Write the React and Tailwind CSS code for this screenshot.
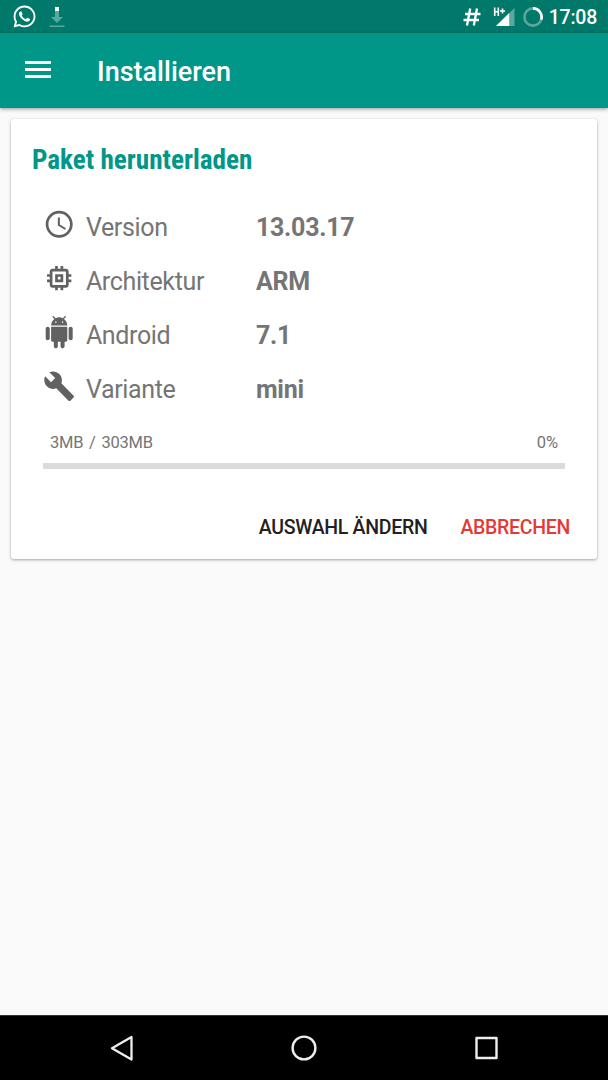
import { FaWhatsapp } from "react-icons/fa";
import { MdAccessTime, MdBuild, MdMemory } from "react-icons/md";

const AndroidIcon = ({ className = "" }) => (
  <svg viewBox="0 0 24 24" fill="currentColor" className={className}>
    <path d="M6 18c0 .55.45 1 1 1h1v3.5c0 .83.67 1.5 1.5 1.5s1.5-.67 1.5-1.5V19h2v3.5c0 .83.67 1.5 1.5 1.5s1.5-.67 1.5-1.5V19h1c.55 0 1-.45 1-1V8H6v10zM3.5 8C2.67 8 2 8.67 2 9.5v7c0 .83.67 1.5 1.5 1.5S5 17.33 5 16.5v-7C5 8.67 4.33 8 3.5 8zm17 0c-.83 0-1.5.67-1.5 1.5v7c0 .83.67 1.5 1.5 1.5s1.5-.67 1.5-1.5v-7c0-.83-.67-1.5-1.5-1.5zm-4.97-5.84l1.3-1.3c.2-.2.2-.51 0-.71-.2-.2-.51-.2-.71 0l-1.48 1.48C13.85 1.23 12.95 1 12 1c-.96 0-1.86.23-2.66.63L7.85.15c-.2-.2-.51-.2-.71 0-.2.2-.2.51 0 .71l1.31 1.31C6.97 3.26 6 5.01 6 7h12c0-1.99-.97-3.75-2.47-4.84zM10 5H9V4h1v1zm5 0h-1V4h1v1z" />
  </svg>
);

const rows = [
  { icon: MdAccessTime, label: "Version", value: "13.03.17" },
  { icon: MdMemory, label: "Architektur", value: "ARM" },
  { icon: AndroidIcon, label: "Android", value: "7.1" },
  { icon: MdBuild, label: "Variante", value: "mini" },
];

const StatusBar = () => (
  <div className="flex h-[33px] items-center bg-[#00796b] pl-3 pr-[11px] text-white">
    <FaWhatsapp className="h-[25px] w-[25px]" />
    <svg viewBox="0 0 16 22" className="ml-3 h-[22px] w-4">
      <path d="M6 5h4v6h4l-6 6-6-6h4zM.5 19.5h15v1.5H.5z" fill="#fff" fillOpacity=".35" />
      <path d="M6 1h4v4H6z" fill="#fff" />
    </svg>
    <svg viewBox="0 0 18 20" className="ml-auto h-5 w-[18px]" fill="none" stroke="#fff" strokeWidth="2.3">
      <path d="M7.2 1.5 4 18.5M14 1.5l-3.2 17M2 7h15.5M.5 13H16" />
    </svg>
    <svg viewBox="0 0 22 20" className="ml-3 h-5 w-[22px]">
      <path d="M21.5 1v18H3z" fill="#fff" fillOpacity=".35" />
      <path d="M16.2 6v13H3z" fill="#fff" />
      <path d="M1.7.5v8.5M5.3.5v8.5M1.7 4.8h3.6M7 4h5M9.5 1.5v5" fill="none" stroke="#fff" strokeWidth="1.6" />
    </svg>
    <svg viewBox="0 0 20 20" className="ml-2 h-5 w-5" fill="none" stroke="#fff" strokeWidth="2.6">
      <circle cx="10" cy="10" r="8.6" strokeOpacity=".35" />
      <path d="M10 1.4a8.6 8.6 0 0 1 8.2 11.2" />
    </svg>
    <span className="ml-1.5 pt-[3px] text-[19.5px] font-medium leading-none tracking-[-0.25px]">17:08</span>
  </div>
);

const Toolbar = () => (
  <header className="relative flex h-[75px] items-center bg-[#009688] pl-[25px] text-white shadow-[0_1px_4px_rgba(0,0,0,0.4)]">
    <div className="-mt-0.5 flex w-[26px] flex-col gap-[4.5px]">
      <div className="h-[2.7px] bg-white" />
      <div className="h-[2.7px] bg-white" />
      <div className="h-[2.7px] bg-white" />
    </div>
    <h1 className="ml-[46px] pt-[3px] text-[27px] font-medium leading-none">Installieren</h1>
  </header>
);

const PackageCard = () => (
  <section className="mx-[11px] mt-[11px] flex h-[440px] flex-col rounded-[3px] bg-white shadow-[0_1px_3px_rgba(0,0,0,0.35)]">
    <h2 className="pl-[21px] pt-[25px] text-[27.2px] font-bold leading-8 text-[#009688] [font-stretch:75%]">
      Paket herunterladen
    </h2>
    <div className="mt-[23px] pl-8">
      {rows.map(({ icon: Icon, label, value }) => (
        <div key={label} className="flex h-[54px] items-center text-[25px] text-[#757575]">
          <Icon className="mb-[3px] h-[32.4px] w-[32.4px] text-[#616161]" />
          <span className="ml-[10.5px] w-[170px] pt-[3px] tracking-[-0.35px]">{label}</span>
          <span className="pt-[3px] tracking-[-0.25px] font-bold">{value}</span>
        </div>
      ))}
    </div>
    <div className="mt-4 flex justify-between px-[39px] text-[16.5px] leading-6 text-[#757575]">
      <span className="tracking-[-0.25px] [word-spacing:2px]">3MB / 303MB</span>
      <span>0%</span>
    </div>
    <div className="mx-8 mt-2 h-1.5 bg-[#dadcdb]" />
    <div className="mt-[47px] flex justify-end gap-[33px] pr-[27px] text-[19.5px] font-medium leading-6 tracking-[-0.3px]">
      <button className="text-[#212121]">AUSWAHL ÄNDERN</button>
      <button className="text-[#e53935]">ABBRECHEN</button>
    </div>
  </section>
);

const NavBar = () => (
  <nav className="mt-auto flex h-[65px] items-center justify-between border-t border-[#333] bg-black px-[108px]">
    <svg viewBox="0 0 28 28" className="h-7 w-7" fill="none" stroke="#eee" strokeWidth="2.3" strokeLinejoin="round">
      <path d="M23.5 3v22.5L4 14.2z" />
    </svg>
    <svg viewBox="0 0 28 28" className="h-7 w-7" fill="none" stroke="#eee" strokeWidth="2.4">
      <circle cx="14" cy="14" r="11.4" />
    </svg>
    <svg viewBox="0 0 28 28" className="h-7 w-7" fill="none" stroke="#eee" strokeWidth="2.4" strokeLinejoin="round">
      <path d="M4.5 4h20v20h-20z" />
    </svg>
  </nav>
);

export default function App() {
  return (
    <div className="flex h-[1080px] w-[608px] flex-col overflow-hidden bg-[#fafafa] font-['Roboto',sans-serif]">
      <StatusBar />
      <Toolbar />
      <PackageCard />
      <NavBar />
    </div>
  );
}
